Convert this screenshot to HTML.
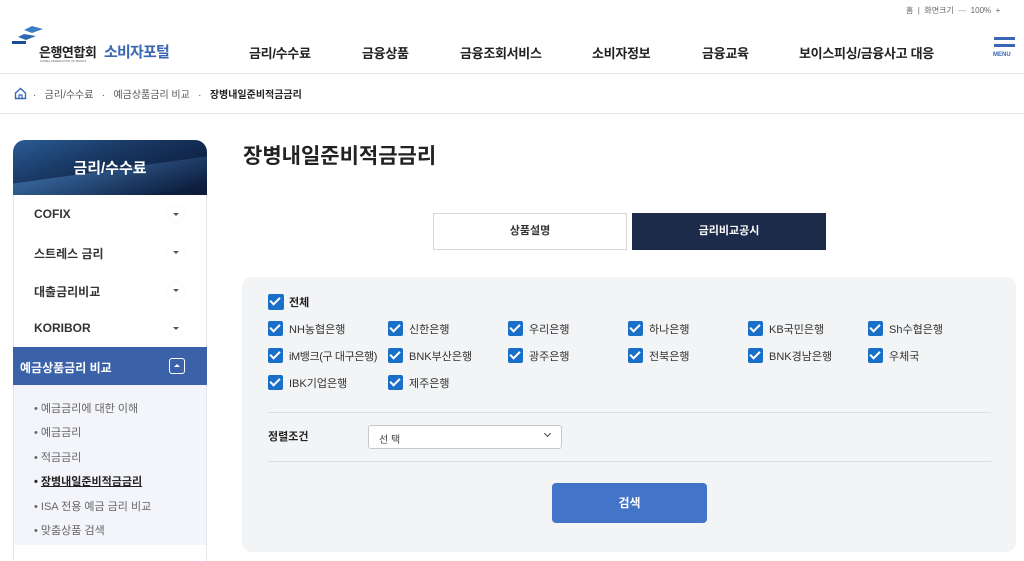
<!DOCTYPE html>
<html><head><meta charset="utf-8"><style>
*{margin:0;padding:0;box-sizing:border-box}
body{width:1024px;height:561px;overflow:hidden;background:#fff;font-family:"Liberation Sans","Noto Sans CJK KR",sans-serif;color:#222;position:relative}
.a{position:absolute;white-space:nowrap}
.nav{font-size:13px;font-weight:bold;color:#222;top:43px;letter-spacing:-0.3px}
.side{left:13px;width:194px;border-left:1px solid #e3e5ea;border-right:1px solid #e3e5ea}
.si{position:absolute;left:34px;font-size:12px;font-weight:bold;color:#333}
.car{position:absolute;left:168px;width:16px;height:16px;border-radius:50%;background:#fff;box-shadow:0 0 2px rgba(0,0,0,.08)}
.car:after{content:"";position:absolute;left:5px;top:7px;border-left:3px solid transparent;border-right:3px solid transparent;border-top:3px solid #555}
.sub{position:absolute;left:34px;font-size:11px;color:#666}
.cb{position:absolute;width:15px;height:15px;background:#1a6fc9;border-radius:2px}
.cb:after{content:"";position:absolute;left:4px;top:1px;width:4px;height:8px;border:solid #fff;border-width:0 2px 2px 0;transform:rotate(45deg)}
.cl{position:absolute;font-size:11px;color:#333}
</style></head><body>
<div class="a" style="left:906px;top:5px;font-size:8px;color:#666">홈 &nbsp;|&nbsp; 화면크기 &nbsp;<span style="color:#999">—</span>&nbsp; 100% &nbsp;+</div>
<svg class="a" style="left:12px;top:24px" width="40" height="26" viewBox="0 0 40 26"><path d="M20 2 L31 5 L20 9 L12 6Z" fill="#3a7fc4"/><path d="M12 10 L24 12 L14 16 L6 13Z" fill="#2d68b0"/><rect x="0" y="17" width="14" height="3" fill="#1a4e94"/></svg>
<div class="a" style="left:39px;top:42px;font-size:13px;font-weight:bold;color:#222;letter-spacing:-0.5px">은행연합회</div>
<div class="a" style="left:104px;top:41px;font-size:15px;font-weight:bold;color:#3a66b3;letter-spacing:-0.8px">소비자포털</div>
<div class="a" style="left:40px;top:59px;font-size:3px;color:#666">KOREA FEDERATION OF BANKS</div>
<div class="a nav" style="left:249px">금리/수수료</div>
<div class="a nav" style="left:362px">금융상품</div>
<div class="a nav" style="left:460px">금융조회서비스</div>
<div class="a nav" style="left:592px">소비자정보</div>
<div class="a nav" style="left:702px">금융교육</div>
<div class="a nav" style="left:799px">보이스피싱/금융사고 대응</div>
<div class="a" style="left:994px;top:37px;width:21px;height:3px;background:#3a66b3"></div>
<div class="a" style="left:994px;top:44px;width:21px;height:3px;background:#3a66b3"></div>
<div class="a" style="left:993px;top:52px;font-size:6px;font-weight:bold;color:#3a66b3">MENU</div>
<div class="a" style="left:0;top:73px;width:1024px;height:1px;background:#e6e6e6"></div>
<svg class="a" style="left:14px;top:87px" width="13" height="13" viewBox="0 0 13 13"><path d="M1.5 6 L6.5 1.5 L11.5 6 V11.5 H1.5Z" fill="none" stroke="#3a66b3" stroke-width="1.4"/><path d="M5 11.5 V8 H8 V11.5" fill="none" stroke="#3a66b3" stroke-width="1.2"/></svg>
<div class="a" style="left:33px;top:86px;font-size:10px;color:#555">·&nbsp;&nbsp; 금리/수수료 &nbsp;&nbsp;·&nbsp;&nbsp; 예금상품금리 비교 &nbsp;&nbsp;·&nbsp;&nbsp; <b style="color:#222">장병내일준비적금금리</b></div>
<div class="a" style="left:0;top:113px;width:1024px;height:1px;background:#e6e6e6"></div>
<div class="a" style="left:13px;top:140px;width:194px;height:55px;border-radius:12px 12px 0 0;background:linear-gradient(160deg,#2a5c95 0%,#1a3a66 35%,#0f2346 70%,#0b1a38 100%);overflow:hidden">
<div style="position:absolute;left:0;top:30px;width:100%;height:30px;background:linear-gradient(170deg,rgba(80,140,200,.5),rgba(20,40,80,0));transform:skewY(-8deg)"></div>
<div style="position:absolute;width:100%;text-align:center;top:17px;font-size:15px;font-weight:bold;color:#fff">금리/수수료</div></div>
<div class="a side" style="top:195px;height:366px"></div>
<div class="si" style="top:207px">COFIX</div><div class="car" style="top:206px"></div>
<div class="si" style="top:245px">스트레스 금리</div><div class="car" style="top:244px"></div>
<div class="si" style="top:283px">대출금리비교</div><div class="car" style="top:282px"></div>
<div class="si" style="top:321px">KORIBOR</div><div class="car" style="top:320px"></div>
<div class="a" style="left:13px;top:347px;width:194px;height:38px;background:#3b62a8"></div>
<div class="si" style="top:359px;left:20px;color:#fff">예금상품금리 비교</div>
<div class="a" style="left:169px;top:358px;width:16px;height:16px;border:1px solid #fff;border-radius:3px"></div>
<div class="a" style="left:174px;top:364px;border-left:3px solid transparent;border-right:3px solid transparent;border-bottom:3px solid #fff"></div>
<div class="a" style="left:14px;top:385px;width:192px;height:160px;background:#f4f5fa"></div>
<div class="sub" style="top:400px">• 예금금리에 대한 이해</div>
<div class="sub" style="top:424px">• 예금금리</div>
<div class="sub" style="top:449px">• 적금금리</div>
<div class="sub" style="top:473px;color:#222;font-weight:bold">• <u>장병내일준비적금금리</u></div>
<div class="sub" style="top:498px">• ISA 전용 예금 금리 비교</div>
<div class="sub" style="top:522px">• 맞춤상품 검색</div>
<div class="a" style="left:243px;top:140px;font-size:21px;font-weight:bold;color:#222">장병내일준비적금금리</div>
<div class="a" style="left:433px;top:213px;width:194px;height:37px;border:1px solid #d6d6d6;text-align:center;line-height:35px;font-size:11px;font-weight:bold;color:#333">상품설명</div>
<div class="a" style="left:632px;top:213px;width:194px;height:37px;background:#1c2b4a;text-align:center;line-height:37px;font-size:11px;font-weight:bold;color:#fff">금리비교공시</div>
<div class="a" style="left:242px;top:277px;width:774px;height:275px;background:#f3f4f6;border-radius:10px"></div>
<div class="cb" style="left:268px;top:294px;width:16px;height:16px"></div><div class="cl" style="left:289px;top:294px;font-weight:bold;color:#222">전체</div>
<div class="cb" style="left:268px;top:321px"></div><div class="cl" style="left:289px;top:321px">NH농협은행</div>
<div class="cb" style="left:388px;top:321px"></div><div class="cl" style="left:409px;top:321px">신한은행</div>
<div class="cb" style="left:508px;top:321px"></div><div class="cl" style="left:529px;top:321px">우리은행</div>
<div class="cb" style="left:628px;top:321px"></div><div class="cl" style="left:649px;top:321px">하나은행</div>
<div class="cb" style="left:748px;top:321px"></div><div class="cl" style="left:769px;top:321px">KB국민은행</div>
<div class="cb" style="left:868px;top:321px"></div><div class="cl" style="left:889px;top:321px">Sh수협은행</div>
<div class="cb" style="left:268px;top:348px"></div><div class="cl" style="left:289px;top:348px;letter-spacing:-0.4px">iM뱅크(구 대구은행)</div>
<div class="cb" style="left:388px;top:348px"></div><div class="cl" style="left:409px;top:348px">BNK부산은행</div>
<div class="cb" style="left:508px;top:348px"></div><div class="cl" style="left:529px;top:348px">광주은행</div>
<div class="cb" style="left:628px;top:348px"></div><div class="cl" style="left:649px;top:348px">전북은행</div>
<div class="cb" style="left:748px;top:348px"></div><div class="cl" style="left:769px;top:348px">BNK경남은행</div>
<div class="cb" style="left:868px;top:348px"></div><div class="cl" style="left:889px;top:348px">우체국</div>
<div class="cb" style="left:268px;top:375px"></div><div class="cl" style="left:289px;top:375px">IBK기업은행</div>
<div class="cb" style="left:388px;top:375px"></div><div class="cl" style="left:409px;top:375px">제주은행</div>
<div class="a" style="left:268px;top:412px;width:723px;height:1px;background:#dcdde0"></div>
<div class="cl" style="left:268px;top:428px;font-weight:bold;color:#222">정렬조건</div>
<div class="a" style="left:368px;top:425px;width:194px;height:24px;background:#fff;border:1px solid #c8c8c8;border-radius:3px;font-size:10px;color:#444;padding:5px 0 0 10px">선 택</div>
<div class="a" style="left:545px;top:431px;width:5px;height:5px;border:solid #444;border-width:0 1.3px 1.3px 0;transform:rotate(45deg)"></div>
<div class="a" style="left:268px;top:461px;width:723px;height:1px;background:#dcdde0"></div>
<div class="a" style="left:552px;top:483px;width:155px;height:40px;background:#4274c8;border-radius:4px;text-align:center;line-height:40px;font-size:12px;font-weight:bold;color:#fff">검색</div>
</body></html>
